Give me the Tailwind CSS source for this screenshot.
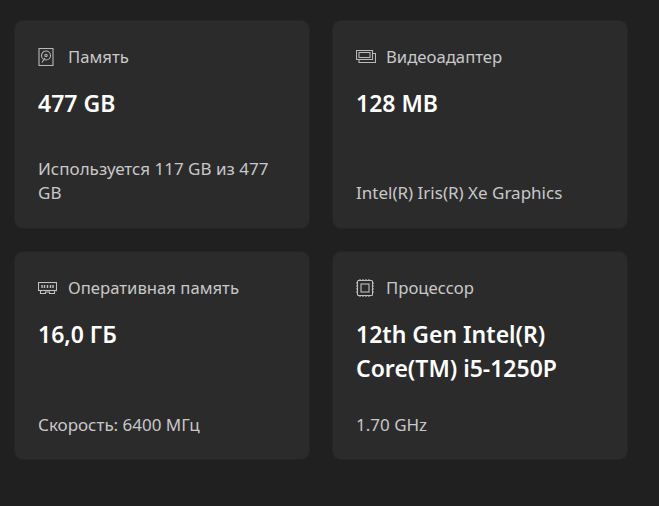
<!DOCTYPE html>
<html lang="ru"><head><meta charset="utf-8">
<script src="https://cdn.jsdelivr.net/npm/@tailwindcss/browser@4"></script>
</head>
<body class="bg-[#202020]">
<main class="w-[659px] h-[506px] overflow-hidden bg-[#202020] pt-5 pl-3.5 font-['Noto_Sans','Open_Sans',sans-serif]">
<div class="grid grid-cols-[296px_296px] grid-rows-[209px_209px] gap-x-[22px] gap-y-[22px]">

<section class="flex flex-col rounded-[9px] bg-[#2b2b2b] border border-[#252525] pl-[23px] pr-10 pt-6 pb-[23px]">
  <div class="flex items-center h-6 text-[16.7px] text-[#c8c8c8]">
    <svg class="w-4 h-[18px] mr-[14px] text-[#b8b8b8]" viewBox="0 0 16 18" fill="none" stroke="currentColor" stroke-width="1.1"><rect x="1" y="0.5" width="14" height="17"/><circle cx="8" cy="7.5" r="4.5"/><circle cx="8" cy="7.5" r="1.2"/><path d="M7 10l-3 4.5"/></svg>
    <span>Память</span>
  </div>
  <div class="mt-[17px] text-[23px] leading-[34px] font-semibold text-white">477 GB</div>
  <div class="mt-auto text-[17px] leading-6 text-[#c8c8c8]">Используется 117 GB из 477 GB</div>
</section>

<section class="flex flex-col rounded-[9px] bg-[#2b2b2b] border border-[#252525] pl-[23px] pr-10 pt-6 pb-[23px]">
  <div class="flex items-center h-6 text-[16.7px] text-[#c8c8c8]">
    <svg class="w-5 h-4 mr-[10px] text-[#b8b8b8]" viewBox="0 0 20 16" fill="none" stroke="currentColor" stroke-width="1.1"><path d="M0.5 10.5v-9h16v9z"/><rect x="3" y="3.5" width="11" height="5"/><path d="M3 10.5v3h16.5v-9h-3"/></svg>
    <span>Видеоадаптер</span>
  </div>
  <div class="mt-[17px] text-[23px] leading-[34px] font-semibold text-white">128 MB</div>
  <div class="mt-auto text-[17px] leading-6 text-[#c8c8c8]">Intel(R) Iris(R) Xe Graphics</div>
</section>

<section class="flex flex-col rounded-[9px] bg-[#2b2b2b] border border-[#252525] pl-[23px] pr-10 pt-6 pb-[22px]">
  <div class="flex items-center h-6 text-[16.7px] text-[#c8c8c8]">
    <svg class="w-[19px] h-3 mr-[11px] text-[#c0c0c0]" viewBox="0 0 19 12" fill="none" stroke="currentColor" stroke-width="1.1"><rect x="0.5" y="0.5" width="18" height="8"/><path d="M4 3v3M6.5 3v3M9.5 3v3M12.5 3v3M15 3v3" stroke-width="1.4"/><path d="M2.5 8.5v3h5v-1.5h4v1.5h5v-3"/></svg>
    <span>Оперативная память</span>
  </div>
  <div class="mt-[17px] text-[23px] leading-[34px] font-semibold text-white">16,0 ГБ</div>
  <div class="mt-auto text-[17px] leading-6 text-[#c8c8c8]">Скорость: 6400 МГц</div>
</section>

<section class="flex flex-col rounded-[9px] bg-[#2b2b2b] border border-[#252525] pl-[23px] pr-10 pt-6 pb-[22px]">
  <div class="flex items-center h-6 text-[16.7px] text-[#c8c8c8]">
    <svg class="w-[18px] h-[18px] mr-3 text-[#c0c0c0]" viewBox="0 0 18 18" fill="none" stroke="currentColor" stroke-width="1.1"><rect x="1.5" y="1.5" width="15" height="15" rx="1"/><rect x="5" y="5" width="8" height="8"/><path d="M0 4h2M0 7h2M0 10h2M0 13h2M16 4h2M16 7h2M16 10h2M16 13h2M4 0v2M7 0v2M10 0v2M13 0v2M4 16v2M7 16v2M10 16v2M13 16v2"/></svg>
    <span>Процессор</span>
  </div>
  <div class="mt-[17px] text-[23px] leading-[34px] font-semibold text-white">12th Gen Intel(R) Core(TM) i5-1250P</div>
  <div class="mt-auto text-[17px] leading-6 text-[#c8c8c8]">1.70 GHz</div>
</section>

</div>
</main>
</body></html>
